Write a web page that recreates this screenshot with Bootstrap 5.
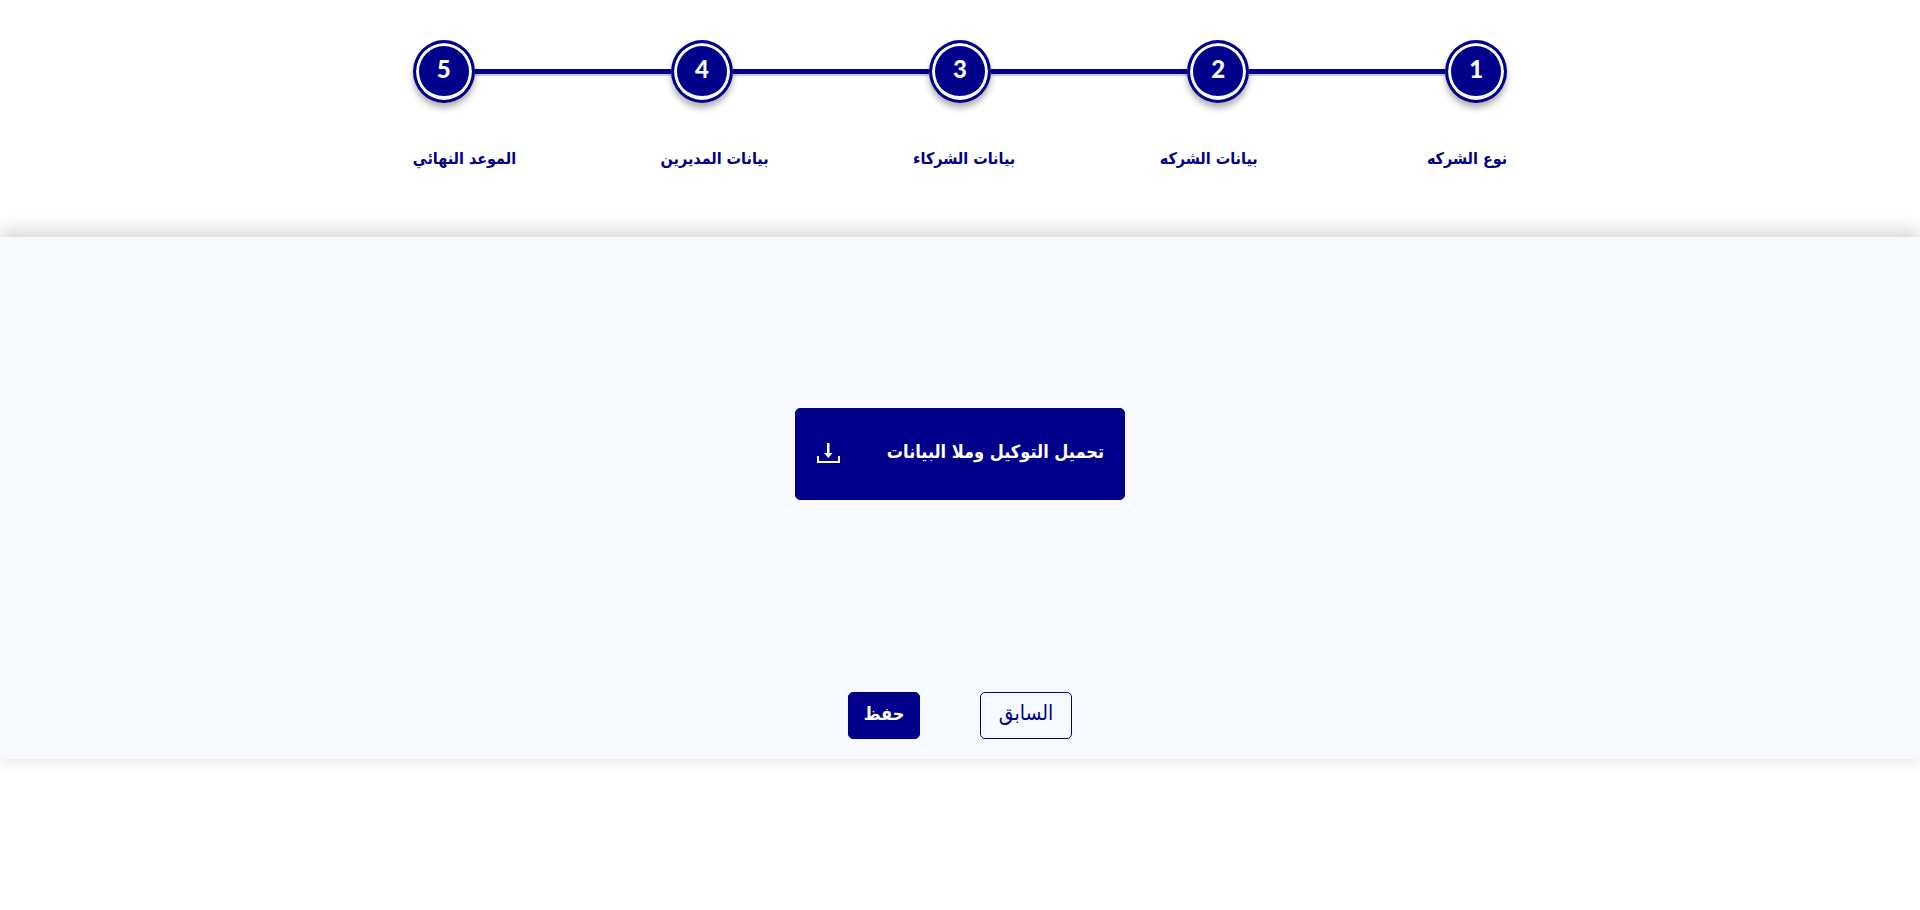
<!DOCTYPE html>
<html lang="ar" dir="rtl">
<head>
<meta charset="utf-8">
<meta name="viewport" content="width=device-width, initial-scale=1">
<title>الموعد النهائي</title>
<link href="https://cdn.jsdelivr.net/npm/bootstrap@5.3.0/dist/css/bootstrap.min.css" rel="stylesheet">
<style>
  :root { --navy: #00008b; --ice: #f6f9ff; }
  body { font-family: "DejaVu Sans Condensed", "DejaVu Sans", sans-serif; background: #fff; }
  .stepper { width: 57%; padding-top: 40px; padding-bottom: 66px; }
  .step-dot {
    width: 62px; height: 63px; flex: none;
    border: 3px solid var(--navy);
    background: var(--navy);
    box-shadow: inset 0 0 0 3px var(--ice), inset 0 -4px 0 0 var(--ice), 0 5px 6px rgba(0, 0, 0, .3);
    color: var(--ice);
    font: 900 24px/52px Lato, sans-serif;
  }
  .step-line { height: 5px; background: var(--navy); box-shadow: 0 2px 1px rgba(0, 0, 50, .2); }
  .step-names { margin-top: 44px; color: var(--navy); font-size: 16px; line-height: 24px; }
  .step-names li:first-child { min-width: 105px; }
  .panel { background: var(--ice); box-shadow: 0 -4px 20px rgba(0, 0, 0, .2); padding: 171px 0 20px; }
  .btn { --bs-btn-border-radius: 5px; font-size: 18px; }
  .btn-navy {
    --bs-btn-bg: var(--navy); --bs-btn-color: #fff; --bs-btn-border-color: var(--navy);
    --bs-btn-hover-bg: #0000a5; --bs-btn-hover-color: #fff; --bs-btn-hover-border-color: #0000a5;
  }
  .btn-line {
    --bs-btn-color: var(--navy); --bs-btn-border-color: var(--navy);
    --bs-btn-hover-bg: var(--navy); --bs-btn-hover-color: #fff;
  }
  .btn-download { width: 330px; height: 92px; padding: 0 20px; }
  .btn-download span { padding-bottom: 5px; }
  .actions { margin-top: 192px; gap: 60px; }
  .actions .btn { height: 47px; padding: 0 12px 4px; }
  .act-prev { width: 92px; font-size: 21px; }
  .act-save { width: 72px; }
</style>
</head>
<body class="min-vh-100">
<header class="stepper mx-auto">
  <div class="d-flex align-items-center">
    <div class="step-dot rounded-circle text-center">1</div>
    <div class="step-line flex-grow-1"></div>
    <div class="step-dot rounded-circle text-center">2</div>
    <div class="step-line flex-grow-1"></div>
    <div class="step-dot rounded-circle text-center">3</div>
    <div class="step-line flex-grow-1"></div>
    <div class="step-dot rounded-circle text-center">4</div>
    <div class="step-line flex-grow-1"></div>
    <div class="step-dot rounded-circle text-center">5</div>
  </div>
  <ol class="step-names list-unstyled d-flex justify-content-between fw-bold text-nowrap mb-0 p-0">
    <li>نوع الشركه</li>
    <li>بيانات الشركه</li>
    <li>بيانات الشركاء</li>
    <li>بيانات المديرين</li>
    <li>الموعد النهائي</li>
  </ol>
</header>
<main class="panel d-flex flex-column align-items-center">
  <button type="button" class="btn btn-navy btn-download fw-bold d-flex align-items-center justify-content-between text-nowrap">
    <span>تحميل التوكيل وملا البيانات</span>
    <svg width="24" height="24" viewBox="0 0 24 24" fill="#fff" aria-hidden="true">
      <path d="M11 1h2.500v10h3L12.300 16 8 11h3z"/>
      <path d="M1 14h2v5h19v-5h2v7H1z"/>
    </svg>
  </button>
  <div class="actions d-flex">
    <button type="button" class="btn btn-line act-prev">السابق</button>
    <button type="button" class="btn btn-navy act-save fw-bold">حفظ</button>
  </div>
</main>
<script src="https://cdn.jsdelivr.net/npm/bootstrap@5.3.0/dist/js/bootstrap.bundle.min.js"></script>
</body>
</html>
